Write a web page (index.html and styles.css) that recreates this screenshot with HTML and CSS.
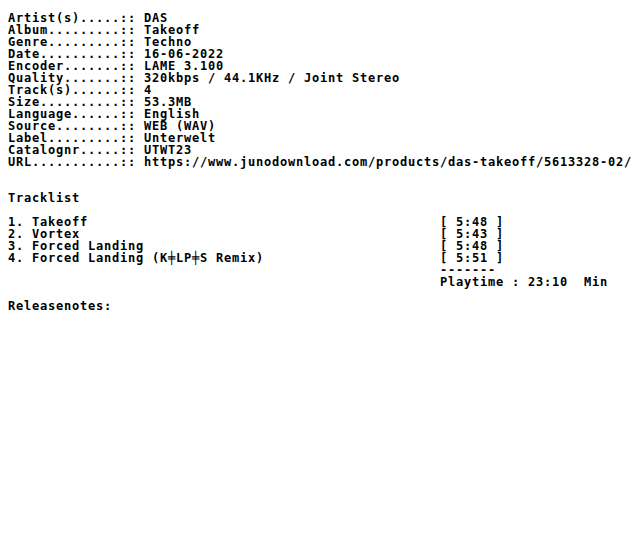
FILE: index.html
```html
<!DOCTYPE html>
<html>
<head>
<meta charset="utf-8">
<link rel="stylesheet" href="styles.css">
</head>
<body>
<pre class="nfo">Artist(s).....:: DAS
Album.........:: Takeoff
Genre.........:: Techno
Date..........:: 16-06-2022
Encoder.......:: LAME 3.100
Quality.......:: 320kbps / 44.1KHz / Joint Stereo
Track(s)......:: 4
Size..........:: 53.3MB
Language......:: English
Source........:: WEB (WAV)
Label.........:: Unterwelt
Catalognr.....:: UTWT23
URL...........:: https://www.junodownload.com/products/das-takeoff/5613328-02/


Tracklist

1. Takeoff                                            [ 5:48 ]
2. Vortex                                             [ 5:43 ]
3. Forced Landing                                     [ 5:48 ]
4. Forced Landing (K╪LP╪S Remix)                      [ 5:51 ]
                                                      -------
                                                      Playtime : 23:10  Min

Releasenotes:
</pre>
</body>
</html>
```
FILE: styles.css
```css
html, body {
  background: #ffffff;
}
body {
  margin: 8px;
}
.nfo {
  margin: 0;
  padding-top: 4px;
  font-family: "DejaVu Sans Mono", "Liberation Mono", monospace;
  font-weight: bold;
  font-size: 12px;
  letter-spacing: 0.776px;
  line-height: 12px;
  color: #000000;
  white-space: pre;
}
```
